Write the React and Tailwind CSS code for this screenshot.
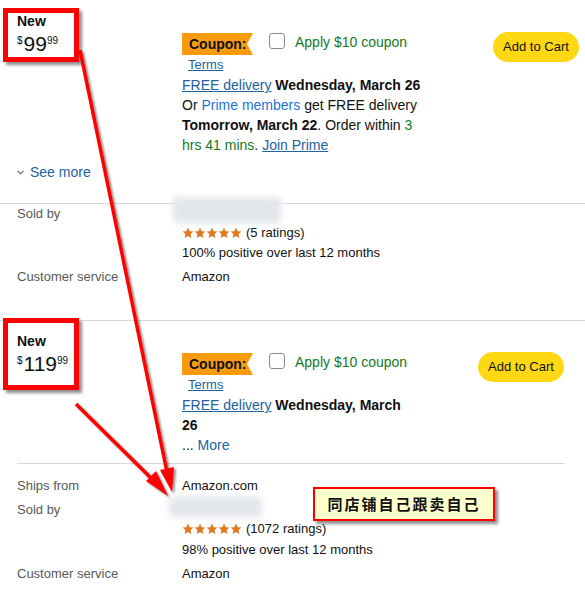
import React from "react";

const FONT = { fontFamily: '"Liberation Sans", Arial, sans-serif' };

const STAR = "M6 0.6 L7.6 4.2 L11.5 4.5 L8.5 7.1 L9.4 11 L6 8.9 L2.6 11 L3.5 7.1 L0.5 4.5 L4.4 4.2 Z";

const Price = ({ whole }) => (
    <div className="flex items-start h-[24px] mt-[1px]">
        <span className="text-[10px] leading-none mt-[4px] mr-[1px]">$</span>
        <span className="text-[21px] leading-[24px]">{whole}</span>
        <span className="text-[10px] leading-none mt-[4px]">99</span>
    </div>
);

const CouponRow = () => (
    <>
        <div className="flex items-start h-[22px] whitespace-nowrap">
            <div className="h-[22px] w-[71px] shrink-0 bg-[#f79b0e] flex items-center pl-[7px] text-[14px] font-bold [clip-path:polygon(0_0,100%_0,calc(100%-6px)_50%,100%_100%,0_100%)]">
                Coupon:
            </div>
            <div className="ml-[16px] w-[16px] h-[16px] shrink-0 border border-[#888c8c] rounded-[3px] bg-white" />
            <div className="ml-[10px] text-[14px] leading-[20px] -mt-[1px] text-[#127a23]">Apply $10 coupon</div>
        </div>
        <div className="mt-[1px] pl-[6px] leading-[18px] text-[13px]">
            <span className="text-[#2162a1] underline">Terms</span>
        </div>
    </>
);

const CartButton = () => (
    <button className="h-[30px] w-[86px] rounded-full bg-[#ffd814] text-[13px] text-[#0f1111]">Add to Cart</button>
);

const Blur = ({ className }) => (
    <div className={`bg-[#e3e6eb] blur-[3px] rounded ${className}`} />
);

const Stars = ({ count }) => (
    <div className="flex items-center h-[20px] text-[13px]">
        <svg width="60" height="12" viewBox="0 0 60 12">
            {[0, 1, 2, 3, 4].map((i) => (
                <path key={i} d={STAR} transform={`translate(${i * 12} 0)`} fill="#de7921" />
            ))}
        </svg>
        <span className="ml-[4px]">({count} ratings)</span>
    </div>
);

export default function App() {
    return (
        <div className="relative w-[585px] h-[609px] overflow-hidden bg-white text-[#0f1111]" style={FONT}>
            {/* Offer 1 */}
            <div className="flex">
                <div className="w-[182px] shrink-0 pl-[17px] pt-[11px]">
                    <div className="text-[14px] font-bold leading-[20px]">New</div>
                    <Price whole="99" />
                </div>
                <div className="w-[240px] pt-[33px] text-[14px]">
                    <CouponRow />
                    <div className="mt-[1px] leading-[20px]">
                        <span className="text-[#2162a1] underline">FREE delivery</span> <span className="font-bold">Wednesday, March 26</span>
                        <br />
                        Or <span className="text-[#1d74d4]">Prime members</span> get FREE delivery
                        <br />
                        <span className="font-bold">Tomorrow, March 22</span>. Order within <span className="text-[#127a23]">3</span>
                        <br />
                        <span className="text-[#127a23]">hrs 41 mins</span>. <span className="text-[#2162a1] underline">Join Prime</span>
                    </div>
                </div>
                <div className="ml-auto mr-[6px] pt-[32px]">
                    <CartButton />
                </div>
            </div>
            <div className="pl-[17px] mt-[7px] h-[20px] flex items-center text-[14px] text-[#2162a1]">
                <svg width="7" height="5" viewBox="0 0 7 5" className="mr-[6px]">
                    <path d="M0.5 0.8 L3.5 3.8 L6.5 0.8" fill="none" stroke="#565959" strokeWidth="1.1" />
                </svg>
                See more
            </div>

            {/* Seller 1 */}
            <div className="mt-[21px] border-t border-[#d5d9d9] text-[13px]">
                <div className="grid grid-cols-[182px_1fr]">
                    <div className="pl-[17px] leading-[20px] text-[#565959]">Sold by</div>
                    <div>
                        <Blur className="-mt-[7px] -ml-[9px] h-[26px] w-[108px]" />
                        <Stars count="5" />
                        <div className="leading-[20px]">100% positive over last 12 months</div>
                    </div>
                    <div className="pl-[17px] mt-[4px] leading-[20px] text-[#565959]">Customer service</div>
                    <div className="mt-[4px] leading-[20px]">Amazon</div>
                </div>
            </div>

            {/* Offer 2 */}
            <div className="mt-[33px] border-t border-[#d5d9d9] pr-[21px]">
                <div className="flex">
                    <div className="w-[182px] shrink-0 pl-[17px] pt-[10px]">
                        <div className="text-[14px] font-bold leading-[20px]">New</div>
                        <Price whole="119" />
                    </div>
                    <div className="w-[222px] pt-[32px] text-[14px]">
                        <CouponRow />
                        <div className="mt-[1px] leading-[20px]">
                            <div>
                                <span className="text-[#2162a1] underline">FREE delivery</span> <span className="font-bold">Wednesday, March</span> <span className="font-bold">26</span>
                            </div>
                            <div>
                                ... <span className="text-[#2162a1]">More</span>
                            </div>
                        </div>
                    </div>
                    <div className="ml-auto pt-[31px]">
                        <CartButton />
                    </div>
                </div>
            </div>

            {/* Seller 2 */}
            <div className="mt-[8px] ml-[17px] mr-[20px] border-t border-[#d5d9d9] text-[13px]">
                <div className="grid grid-cols-[165px_1fr] pt-[12px]">
                    <div className="leading-[20px] text-[#565959]">Ships from</div>
                    <div className="leading-[20px]">Amazon.com</div>
                    <div className="mt-[4px] leading-[20px] text-[#565959]">Sold by</div>
                    <div className="mt-[4px]">
                        <Blur className="-mt-[3px] -ml-[13px] h-[20px] w-[93px]" />
                        <div className="mt-[2px]">
                            <Stars count="1072" />
                        </div>
                        <div className="leading-[20px] mt-[1px]">98% positive over last 12 months</div>
                    </div>
                    <div className="mt-[4px] leading-[20px] text-[#565959]">Customer service</div>
                    <div className="mt-[4px] leading-[20px]">Amazon</div>
                </div>
            </div>

            {/* Annotations */}
            <div className="absolute left-[3px] top-[8px] w-[76px] h-[54px] border-[5px] border-[#ff0000] shadow-[3px_3px_3px_rgba(0,0,0,0.45)]" />
            <div className="absolute left-[3px] top-[318px] w-[76px] h-[72px] border-[5px] border-[#ff0000] shadow-[3px_3px_3px_rgba(0,0,0,0.45)]" />

            <svg className="absolute inset-0 pointer-events-none" width="585" height="609">
                <defs>
                    <filter id="sh" x="-20%" y="-20%" width="140%" height="140%">
                        <feDropShadow dx="2" dy="2" stdDeviation="1.2" floodColor="#000" floodOpacity="0.45" />
                    </filter>
                </defs>
                <g filter="url(#sh)" fill="#ff0000" stroke="#ff0000">
                    <line x1="80" y1="50" x2="167" y2="472" strokeWidth="3.5" />
                    <polygon points="172,492 174,467 160,470" stroke="none" />
                    <line x1="76" y1="404" x2="152" y2="479" strokeWidth="3.5" />
                    <polygon points="168,496 156,471 146,481" stroke="none" />
                </g>
            </svg>

            <div
                className="absolute left-[313px] top-[487px] w-[182px] h-[34px] border-2 border-[#ff0000] bg-[#ffffcc] flex items-center justify-center text-[15px] font-bold tracking-[2px] shadow-[3px_3px_3px_rgba(0,0,0,0.45)]"
                style={{ fontFamily: '"Noto Sans CJK SC", sans-serif' }}
            >
                同店铺自己跟卖自己
            </div>
        </div>
    );
}
